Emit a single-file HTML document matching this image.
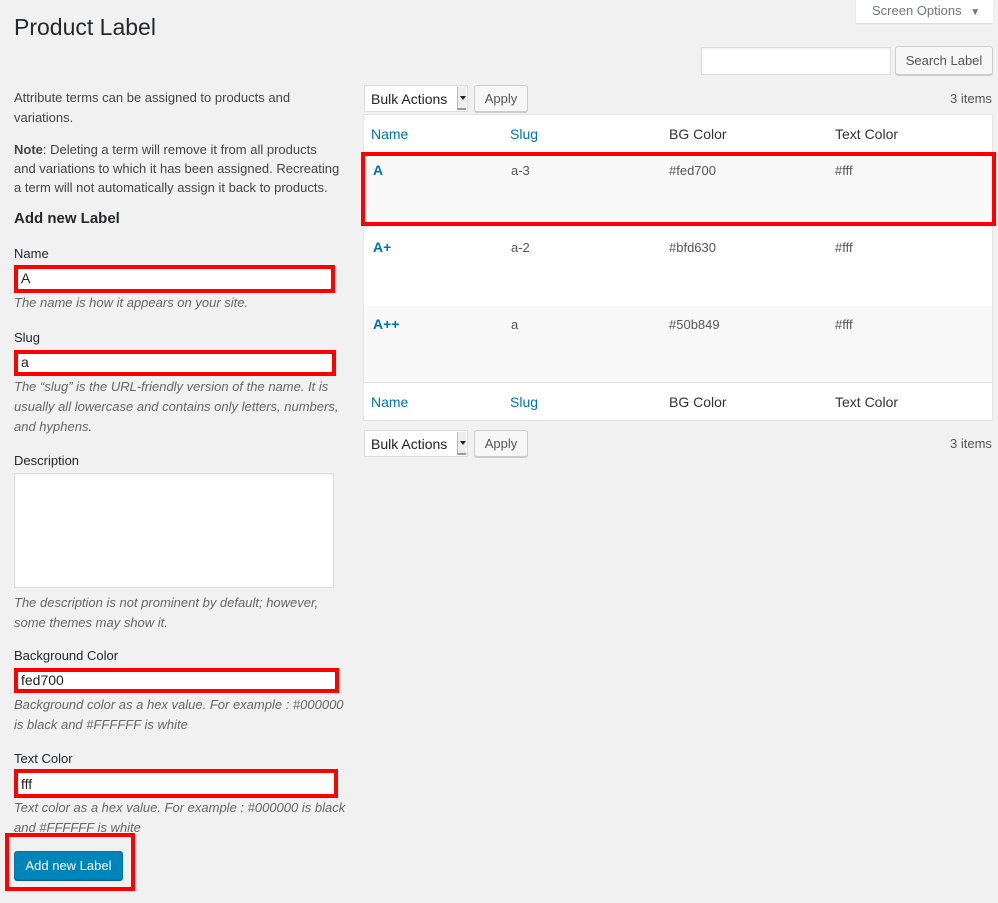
<!DOCTYPE html>
<html><head><meta charset="utf-8"><style>
*{box-sizing:border-box;margin:0;padding:0}
body{width:998px;height:903px;background:#f1f1f1;font-family:"Liberation Sans",sans-serif;color:#444;position:relative;overflow:hidden;font-size:13px}
.a{position:absolute;white-space:nowrap}
.inp{position:absolute;background:#fff;border:1px solid #ddd;box-shadow:inset 0 1px 2px rgba(0,0,0,.07)}
.red{position:absolute;border:4px solid #f00}
.btn{position:absolute;background:#f7f7f7;border:1px solid #ccc;border-radius:3px;box-shadow:0 1px 0 #ccc;color:#555;font-size:13px;text-align:center}
.hint{position:absolute;font-style:italic;color:#666;font-size:13px;line-height:20px;white-space:nowrap}
.lbl{position:absolute;font-size:13px;color:#23282d}
.sel{position:absolute;background:#fff;border:1px solid #ddd;font-size:14px;color:#222;padding:5px 0 0 6px}
.sel i{position:absolute;right:1px;top:1px;bottom:1px;width:9px;background:#eee;border-left:1px solid #bbb;border-bottom:2px solid #999}
.sel i:after{content:"";position:absolute;left:2px;top:9px;border:3px solid transparent;border-top:4px solid #222}
.th{position:absolute;font-size:14px}
.td{position:absolute;font-size:13px;color:#555}
.nm{position:absolute;font-size:14px;font-weight:bold;color:#0073aa}
</style></head><body>
<div class="a" style="left:14px;top:14px;font-size:23px;color:#23282d">Product Label</div>
<div class="a" style="left:856px;top:0;width:137px;height:23px;background:#fff;box-shadow:0 1px 1px rgba(0,0,0,.1);color:#72777c;font-size:13px;padding:3px 0 0 16px">Screen Options <span style="font-size:10px;margin-left:5px">▼</span></div>
<div class="inp" style="left:701px;top:47px;width:190px;height:28px"></div>
<div class="btn" style="left:895px;top:46px;width:98px;height:29px;line-height:27px">Search Label</div>

<div class="a" style="left:14px;top:88px;line-height:20px;font-size:13px">Attribute terms can be assigned to products and<br>variations.</div>
<div class="a" style="left:14px;top:140px;line-height:19px;font-size:13px"><b>Note</b>: Deleting a term will remove it from all products<br>and variations to which it has been assigned. Recreating<br>a term will not automatically assign it back to products.</div>
<div class="a" style="left:14px;top:210px;font-size:15px;font-weight:bold;color:#23282d">Add new Label</div>

<div class="lbl" style="left:14px;top:246px">Name</div>
<div class="red" style="left:14px;top:265px;width:321px;height:28px;background:#fff"></div>
<div class="a" style="left:21px;top:270px;font-size:14px;color:#222">A</div>
<div class="hint" style="left:14px;top:293px">The name is how it appears on your site.</div>

<div class="lbl" style="left:14px;top:330px">Slug</div>
<div class="red" style="left:14px;top:350px;width:322px;height:26px;background:#fff"></div>
<div class="a" style="left:21px;top:354px;font-size:14px;color:#222">a</div>
<div class="hint" style="left:14px;top:377px">The “slug” is the URL-friendly version of the name. It is<br>usually all lowercase and contains only letters, numbers,<br>and hyphens.</div>

<div class="lbl" style="left:14px;top:453px">Description</div>
<div class="inp" style="left:14px;top:473px;width:320px;height:115px"></div>
<div class="hint" style="left:14px;top:593px">The description is not prominent by default; however,<br>some themes may show it.</div>

<div class="lbl" style="left:14px;top:648px">Background Color</div>
<div class="red" style="left:14px;top:668px;width:325px;height:25px;background:#fff"></div>
<div class="a" style="left:21px;top:672px;font-size:14px;color:#222">fed700</div>
<div class="hint" style="left:14px;top:695px">Background color as a hex value. For example : #000000<br>is black and #FFFFFF is white</div>

<div class="lbl" style="left:14px;top:751px">Text Color</div>
<div class="red" style="left:14px;top:769px;width:324px;height:29px;background:#fff"></div>
<div class="a" style="left:21px;top:776px;font-size:14px;color:#222">fff</div>
<div class="hint" style="left:14px;top:798px">Text color as a hex value. For example : #000000 is black<br>and #FFFFFF is white</div>

<div class="red" style="left:5px;top:833px;width:130px;height:58px"></div>
<div class="a" style="left:14px;top:851px;width:109px;height:29px;background:#0085ba;border:1px solid #0073aa;border-radius:3px;box-shadow:0 1px 0 #006799;color:#fff;font-size:13px;text-align:center;line-height:27px">Add new Label</div>

<div class="sel" style="left:364px;top:85px;width:104px;height:27px">Bulk Actions<i></i></div>
<div class="btn" style="left:474px;top:85px;width:54px;height:27px;line-height:25px">Apply</div>
<div class="a" style="left:950px;top:91px;font-size:13px;color:#555">3 items</div>

<div class="a" style="left:363px;top:114px;width:630px;height:307px;background:#fff;border:1px solid #e5e5e5"></div>
<div class="a" style="left:364px;top:152px;width:628px;height:77px;background:#f9f9f9"></div>
<div class="a" style="left:364px;top:306px;width:628px;height:77px;background:#f9f9f9;border-bottom:1px solid #e1e1e1"></div>
<div class="th" style="left:371px;top:126px;color:#0073aa">Name</div>
<div class="th" style="left:510px;top:126px;color:#0073aa">Slug</div>
<div class="th" style="left:669px;top:126px;color:#333">BG Color</div>
<div class="th" style="left:835px;top:126px;color:#333">Text Color</div>

<div class="nm" style="left:373px;top:162px">A</div>
<div class="td" style="left:511px;top:163px">a-3</div>
<div class="td" style="left:669px;top:163px">#fed700</div>
<div class="td" style="left:835px;top:163px">#fff</div>
<div class="red" style="left:361px;top:152px;width:635px;height:74px"></div>

<div class="nm" style="left:373px;top:239px">A+</div>
<div class="td" style="left:511px;top:240px">a-2</div>
<div class="td" style="left:669px;top:240px">#bfd630</div>
<div class="td" style="left:835px;top:240px">#fff</div>

<div class="nm" style="left:373px;top:316px">A++</div>
<div class="td" style="left:511px;top:317px">a</div>
<div class="td" style="left:669px;top:317px">#50b849</div>
<div class="td" style="left:835px;top:317px">#fff</div>

<div class="th" style="left:371px;top:394px;color:#0073aa">Name</div>
<div class="th" style="left:510px;top:394px;color:#0073aa">Slug</div>
<div class="th" style="left:669px;top:394px;color:#333">BG Color</div>
<div class="th" style="left:835px;top:394px;color:#333">Text Color</div>

<div class="sel" style="left:364px;top:430px;width:104px;height:27px">Bulk Actions<i></i></div>
<div class="btn" style="left:474px;top:430px;width:54px;height:27px;line-height:25px">Apply</div>
<div class="a" style="left:950px;top:436px;font-size:13px;color:#555">3 items</div>
</body></html>
